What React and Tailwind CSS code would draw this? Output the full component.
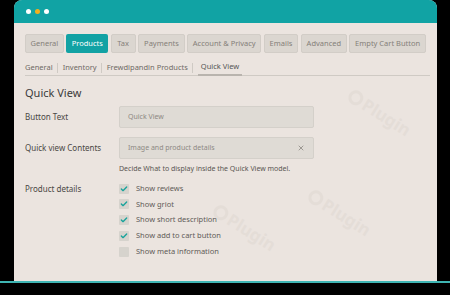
import { Check, X } from 'lucide-react';

const tabs = [
    { label: 'General', w: 'w-[39px]' },
    { label: 'Products', w: 'w-[42px]', active: true },
    { label: 'Tax', w: 'w-[25px]' },
    { label: 'Payments', w: 'w-[47px]' },
    { label: 'Account & Privacy', w: 'w-[74px]' },
    { label: 'Emails', w: 'w-[35px]' },
    { label: 'Advanced', w: 'w-[46px]' },
    { label: 'Empty Cart Button', w: 'w-[77px]' },
];

const subTabs = ['General', 'Inventory', 'Frewdipandin Products', 'Quick View'];

const details = [
    { label: 'Show reviews', on: true },
    { label: 'Show griot', on: true },
    { label: 'Show short description', on: true },
    { label: 'Show add to cart button', on: true },
    { label: 'Show meta information', on: false },
];

// faint "Plugin" marks, kept to the empty parts of the panel
const marks = ['left-[290px] top-[200px]', 'left-[330px] top-[100px]', 'left-[195px] top-[215px]'];

function Mark({ pos }) {
    return (
        <div className={`absolute ${pos} rotate-[32deg] flex items-center gap-[2px] text-[17px] font-bold text-[#9a8f88] opacity-[0.08] pointer-events-none select-none`}>
            <span className="w-[15px] h-[15px] rounded-full border-[3px] border-[#9a8f88]" />
            Plugin
        </div>
    );
}

export default function App() {
    return (
        <div className="w-[450px] h-[295px] bg-black overflow-hidden relative" style={{ fontFamily: '"Noto Sans", "Open Sans", sans-serif' }}>
            <div className="ml-[14px] w-[423px] h-[281px] bg-[#ebe4df] rounded-t-[8px] overflow-hidden flex flex-col relative">
                <div className="h-[23px] bg-[#11a3a4] flex items-center gap-[4px] pl-[12px] shrink-0">
                    <span className="w-[5px] h-[5px] rounded-full bg-white" />
                    <span className="w-[5px] h-[5px] rounded-full bg-[#f2b01e]" />
                    <span className="w-[5px] h-[5px] rounded-full bg-white" />
                </div>

                <div className="px-[11px] pt-[11px] flex flex-col">
                    <div className="flex gap-[2.5px]">
                        {tabs.map(t => (
                            <div key={t.label} className={`${t.w} h-[19px] flex items-center justify-center rounded-[2px] text-[7.5px] whitespace-nowrap ${t.active ? 'bg-[#12a2a4] text-white' : 'bg-[#dbd6d0] text-[#858079] border border-[#d2cdc7]'}`}>
                                {t.label}
                            </div>
                        ))}
                    </div>

                    <div className="mt-[7px] h-[16px] flex items-center border-b border-[#cfcac4] w-[405px] text-[7.5px] text-[#6f6a65]">
                        {subTabs.map((s, i) => (
                            <div key={s} className="flex items-center h-full">
                                {i > 0 && <span className="w-px h-[10px] bg-[#cfcac4] mx-[4.5px]" />}
                                <span className={`h-full flex items-center ${s === 'Quick View' ? 'text-[#555] border-b-2 border-[#b9b4ae] -mb-px px-[3px]' : ''}`}>{s}</span>
                            </div>
                        ))}
                    </div>

                    <div className="mt-[11px] text-[11px] text-[#3b3b3b] leading-none">Quick View</div>

                    <div className="mt-[8px] flex items-center">
                        <div className="w-[94px] text-[8px] text-[#4a4744]">Button Text</div>
                        <div className="w-[195px] h-[22px] bg-[#dfdbd5] border border-[#d4d0ca] rounded-[2px] flex items-center px-[8px] text-[7px] text-[#8e8984]">
                            Quick View
                        </div>
                    </div>

                    <div className="mt-[9px] flex items-center">
                        <div className="w-[94px] text-[8px] text-[#4a4744]">Quick view Contents</div>
                        <div className="w-[195px] h-[22px] bg-[#dfdbd5] border border-[#d4d0ca] rounded-[2px] flex items-center justify-between px-[8px] text-[7px] text-[#8e8984]">
                            Image and product details
                            <X className="w-[8px] h-[8px] text-[#7a7570]" strokeWidth={2} />
                        </div>
                    </div>
                    <div className="ml-[94px] mt-[5px] text-[7px] text-[#5a5652]">Decide What to display inside the Quick View model.</div>

                    <div className="mt-[9px] flex items-start">
                        <div className="w-[94px] text-[8px] text-[#4a4744] leading-[10px]">Product details</div>
                        <div className="flex flex-col gap-[5.75px]">
                            {details.map(d => (
                                <div key={d.label} className="flex items-center gap-[7px] h-[10px]">
                                    <span className="w-[10px] h-[10px] bg-[#d6d3cd] rounded-[1px] flex items-center justify-center">
                                        {d.on && <Check className="w-[8px] h-[8px] text-[#17a39b]" strokeWidth={4} />}
                                    </span>
                                    <span className="text-[7.5px] text-[#5f5b57]">{d.label}</span>
                                </div>
                            ))}
                        </div>
                    </div>
                </div>

                {marks.map(m => <Mark key={m} pos={m} />)}
            </div>
            <div className="h-[2px] bg-[#3fb5b3] w-full" />
        </div>
    );
}
